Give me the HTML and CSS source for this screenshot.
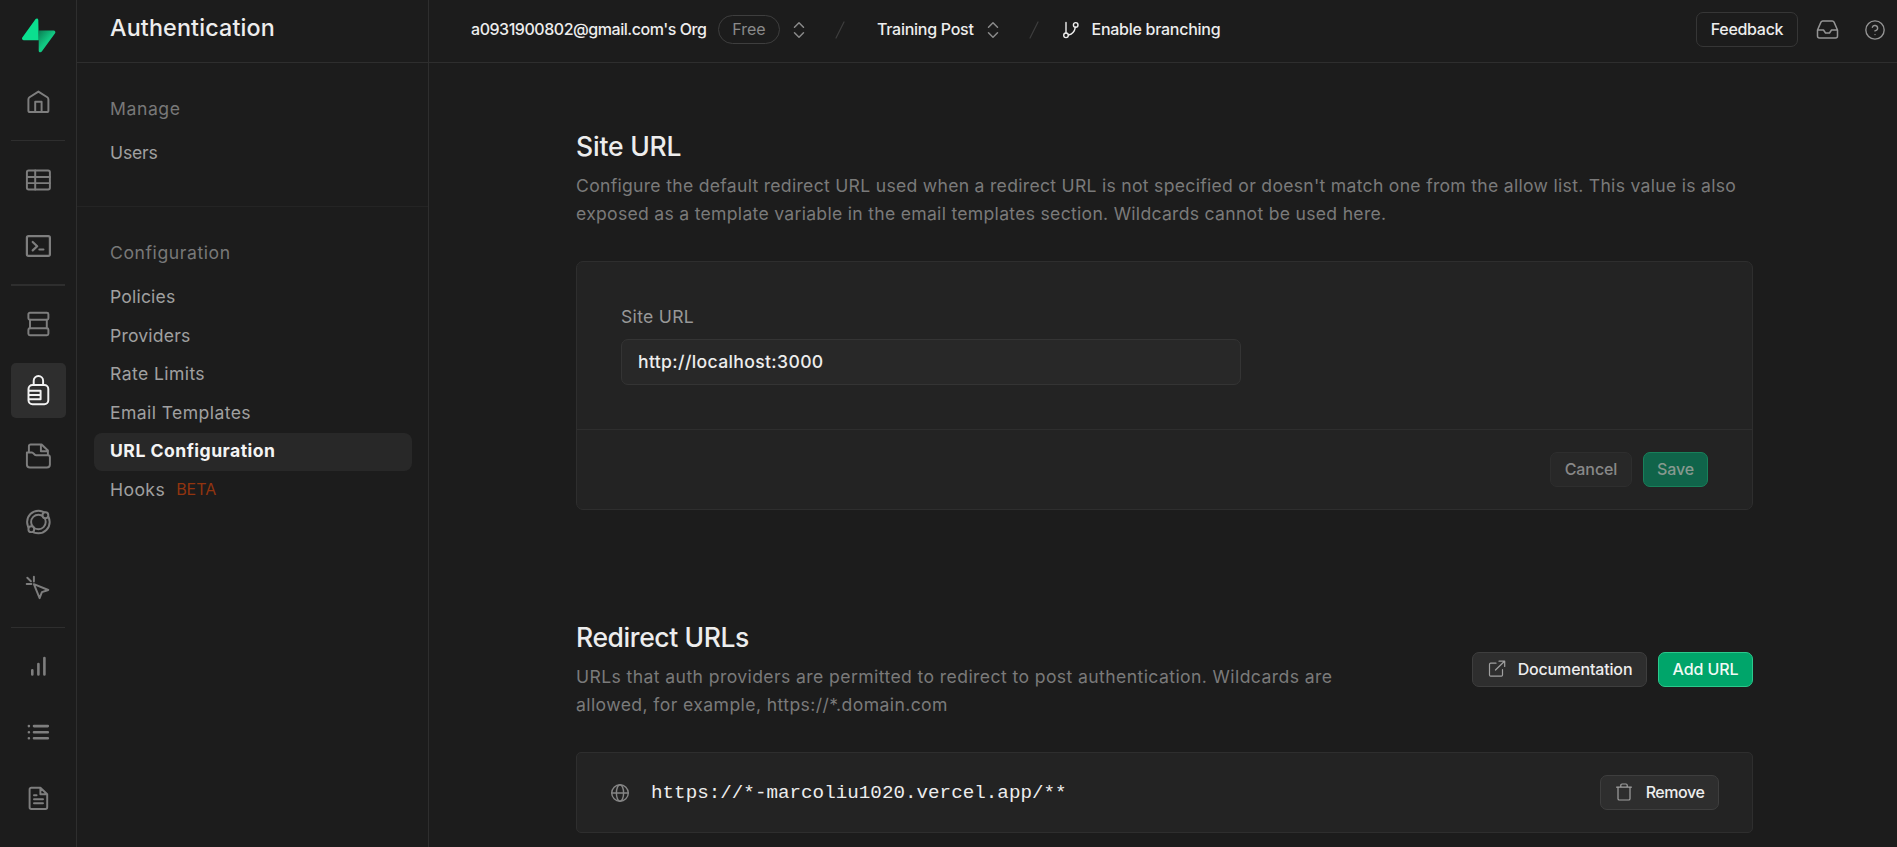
FILE: index.html
```html
<!DOCTYPE html>
<html lang="en">
<head>
<meta charset="utf-8">
<title>Authentication | URL Configuration</title>
<link rel="stylesheet" href="styles.css">
</head>
<body>
<div class="app">
  <nav class="rail">
    <a class="logo" href="#"><svg width="34" height="35" viewBox="0 0 34 35">
      <defs><linearGradient id="bolt" x1="17" y1="14" x2="26" y2="22" gradientUnits="userSpaceOnUse"><stop offset="0" stop-color="#0b8457"/><stop offset="1" stop-color="#12c983"/></linearGradient></defs>
      <path fill="url(#bolt)" d="M16.7 12.4H31.4a1.8 1.8 0 0 1 1.5 3L19.8 33.6c-1 1.3-3.1.7-3.1-.9z"/>
      <path fill="#0be08f" d="M16.7 22.3H2a1.8 1.8 0 0 1-1.5-3L13.6 1.100c1-1.300 2.700-.7 2.700.9z"/>
    </svg></a>
    <a class="item" href="#"><svg class="ico" viewBox="0 0 28 28"><path d="M14 3.600 5.100 9.300Q4 10.100 4 11.500V22.400A1.600 1.600 0 0 0 5.600 24H22.400A1.600 1.600 0 0 0 24 22.400V11.500Q24 10.100 22.900 9.300ZM10.800 24V13.700h6.400V24"/></svg></a>
    <hr class="rule-home">
    <a class="item" href="#"><svg class="ico" viewBox="0 0 28 28"><rect x="2.500" y="4.500" width="23" height="19" rx="1.800"/><path d="M10.800 4.500v19M2.500 10.900h23M2.500 17.100h23"/></svg></a>
    <a class="item" href="#"><svg class="ico thick" viewBox="0 0 28 28"><rect x="2.500" y="4.200" width="23" height="19.600" rx="1.600"/><path d="m8.300 10 4.500 4.200-4.500 4.200M15 17.500h4"/></svg></a>
    <hr class="rule-editor">
    <a class="item" href="#"><svg class="ico" viewBox="0 0 28 28"><rect x="4" y="2.700" width="20" height="7" rx="1.500"/><path d="M5.600 9.700v8.600M22.400 9.700v8.600"/><rect x="4" y="18.300" width="20" height="7" rx="1.500"/></svg></a>
    <a class="item active" href="#"><svg class="ico" viewBox="0 0 28 28"><rect x="4.100" y="9" width="19.800" height="19.200" rx="4"/><path d="M9.300 9V4.700a4.700 4.700 0 0 1 9.400 0V9M4.500 14.700H16.200V23.200H4.500M4.500 19H15.500"/></svg></a>
    <a class="item" href="#"><svg class="ico" viewBox="0 0 28 28"><path d="M4.500 10V4.200a1.700 1.700 0 0 1 1.700-1.700H17.200L23.500 8.500V13M16.500 2.800V9.200H23.300M2.500 10.400H7.600c1.600 0 1.900 2.800 4 2.800H23.500a2 2 0 0 1 2 2V22.500a3 3 0 0 1-3 3H5.500a3 3 0 0 1-3-3Z"/></svg></a>
    <a class="item" href="#"><svg class="ico" viewBox="0 0 28 28"><circle cx="14" cy="14" r="11.300"/><circle cx="14" cy="14" r="7.300"/><circle class="knock" cx="21" cy="7.200" r="2.900"/><circle class="knock" cx="6.900" cy="21.200" r="2.900"/></svg></a>
    <a class="item" href="#"><svg class="ico" viewBox="0 0 28 28"><path d="M2.300 10H7M9.500 2.800V7.500M2.900 3.800 6.500 7.300M9.500 10.200 23.900 16 17.500 18.200 15.200 24.200Z"/></svg></a>
    <hr>
    <a class="item" href="#"><svg class="ico heavy" viewBox="0 0 28 28"><path d="M7.900 18.300V22.500M14 12V22.500M20 6V22.500"/></svg></a>
    <a class="item" href="#"><svg class="ico heavy" viewBox="0 0 28 28"><path d="M9.600 8.100H23.400M9.600 14.200H23.400M9.600 20.300H23.400M4.500 8.100h.01M4.500 14.200h.01M4.500 20.300h.01"/></svg></a>
    <a class="item" href="#"><svg class="ico" viewBox="0 0 28 28"><path d="M16 3.800H6.900A1.700 1.700 0 0 0 5.200 5.500V23.300A1.700 1.700 0 0 0 6.900 25H21.100A1.700 1.700 0 0 0 22.800 23.300V10.300ZM16 4V10.200H22.600M9.600 11.300H12.200M9.600 15.200H18.600M9.600 19.200H18.600"/></svg></a>
  </nav>

  <aside class="panel">
    <h1 class="panel-title"><span>Authentication</span></h1>
    <section class="group">
      <h2>Manage</h2>
      <a class="link users" href="#">Users</a>
    </section>
    <section class="group">
      <h2>Configuration</h2>
      <a class="link short" href="#">Policies</a>
      <a class="link short" href="#">Providers</a>
      <a class="link" href="#">Rate Limits</a>
      <a class="link" href="#">Email Templates</a>
      <a class="link current" href="#">URL Configuration</a>
      <a class="link" href="#">Hooks<span class="beta">BETA</span></a>
    </section>
  </aside>

  <div class="content">
    <header class="topbar">
      <a class="crumb org" href="#">a0931900802@gmail.com's Org</a>
      <span class="plan"><span>Free</span></span>
      <svg class="updown first" viewBox="0 0 12 18"><path d="M1.500 6.300 6 1.800l4.500 4.500M1.500 11.700 6 16.200l4.500-4.500"/></svg>
      <svg class="slash" viewBox="0 0 10 18"><path d="M9 1 1 17"/></svg>
      <a class="crumb project" href="#">Training Post</a>
      <svg class="updown second" viewBox="0 0 12 18"><path d="M1.500 6.300 6 1.800l4.500 4.500M1.500 11.700 6 16.200l4.500-4.500"/></svg>
      <svg class="slash" viewBox="0 0 10 18"><path d="M9 1 1 17"/></svg>
      <svg class="branch" viewBox="0 0 18 18"><path d="M4 1.400V12M13.300 6.300Q12.300 12.500 6.500 14"/><circle cx="4" cy="14.300" r="2.300"/><circle cx="13.700" cy="3.900" r="2.300"/></svg>
      <a class="crumb enable" href="#">Enable branching</a>
      <div class="tools">
        <button class="btn outline feedback">Feedback</button>
        <svg class="inbox" viewBox="0 0 24 24"><path d="M22 12H16l-2 3H10L8 12H2M5.450 4.100 2 12v6a2 2 0 0 0 2 2H20a2 2 0 0 0 2-2V12L18.550 4.100A2 2 0 0 0 16.760 3H7.240A2 2 0 0 0 5.450 4.100Z"/></svg>
        <svg class="help" viewBox="0 0 24 24"><circle cx="12" cy="12" r="10"/><path d="M9.100 9a3 3 0 0 1 5.800 1c0 2-3 3-3 3M12 17h.01"/></svg>
      </div>
    </header>

    <main class="main">
      <section>
        <h2 class="title site">Site URL</h2>
        <p class="desc">Configure the default redirect URL used when a redirect URL is not specified or doesn't match one from the allow list. This value is also<br>exposed as a template variable in the email templates section. Wildcards cannot be used here.</p>
        <form class="card">
          <div class="card-body">
            <label for="site-url">Site URL</label>
            <input id="site-url" type="text" value="http://localhost:3000">
          </div>
          <div class="card-foot">
            <button class="btn neutral cancel" type="button">Cancel</button>
            <button class="btn primary save" type="button">Save</button>
          </div>
        </form>
      </section>

      <section class="redirects">
        <div class="head">
          <div>
            <h2 class="title">Redirect URLs</h2>
            <p class="desc wide">URLs that auth providers are permitted to redirect to post authentication. Wildcards are<br>allowed, for example, https://*.domain.com</p>
          </div>
          <div class="actions">
            <button class="btn neutral docs"><svg viewBox="0 0 18 18"><path d="M8 3.200H2.700A1.200 1.200 0 0 0 1.500 4.400V15A1.200 1.200 0 0 0 2.700 16.200H13.300A1.200 1.200 0 0 0 14.500 15V9.700M7.500 10 16.500 1.200M11 1.200h5.700V6.500"/></svg><span>Documentation</span></button>
            <button class="btn primary add">Add URL</button>
          </div>
        </div>
        <div class="url-row">
          <svg class="globe" viewBox="0 0 20 20"><circle cx="10" cy="10" r="8.300"/><ellipse cx="10" cy="10" rx="3.600" ry="8.300"/><path d="M1.700 10H18.300"/></svg>
          <span class="url">https://*-marcoliu1020.vercel.app/**</span>
          <button class="btn neutral remove"><svg viewBox="0 0 18 18"><path d="M1.600 4.200H16.400M3 4.200V15.700A1.300 1.300 0 0 0 4.300 17H13.700A1.300 1.300 0 0 0 15 15.700V4.200M5.800 4V2.200A1.200 1.200 0 0 1 7 1H11A1.200 1.200 0 0 1 12.200 2.200V4"/></svg><span>Remove</span></button>
        </div>
      </section>
    </main>
  </div>
</div>
</body>
</html>
```
FILE: styles.css
```css
* { box-sizing: border-box; }
body {
  margin: 0;
  background: #1c1c1c;
  color: #ededed;
  font-family: Inter, "Liberation Sans", sans-serif;
  font-size: 17.6px;
}
a { color: inherit; text-decoration: none; }
h1, h2, p { margin: 0; font-weight: 400; }
svg { display: block; flex: none; fill: none; stroke: currentColor; stroke-linecap: round; stroke-linejoin: round; }

.app { display: flex; height: 847px; overflow: hidden; }

/* Icon rail */
.rail {
  flex: none;
  width: 77px;
  padding: 18px 10px 0 11px;
  border-right: 1px solid #2e2e2e;
  display: flex;
  flex-direction: column;
  gap: 11px;
}
.rail hr { width: 54px; height: 1px; margin: 0; border: 0; background: #2e2e2e; flex: none; }
.rail .rule-home { margin: -0.6px 0 0.6px; }
.rail .rule-editor { height: 2px; margin: -0.5px 0; }
.logo { height: 45.5px; padding-left: 11px; flex: none; }
.logo svg { stroke: none; }
.item {
  flex: none;
  width: 55px;
  height: 55px;
  padding-right: 1px;
  display: grid;
  place-items: center;
  border-radius: 5px;
  color: #7e7e7e;
}
.item.active { background: #2e2e2e; color: #f2f2f2; }
.ico { width: 28px; height: 28px; stroke-width: 1.95; overflow: visible; }
.ico > * { transform: translateX(0.4px); }
.ico.thick { stroke-width: 2.2; }
.ico.heavy { stroke-width: 2.6; }
.knock { fill: #1c1c1c; }

/* Section menu */
.panel { flex: none; width: 352px; border-right: 1px solid #2e2e2e; }
.panel-title {
  height: 63px;
  padding: 0 0 8px 33px;
  border-bottom: 1px solid #2e2e2e;
  display: flex;
  align-items: center;
  font-size: 23.3px;
  font-weight: 500;
  letter-spacing: 0.15px;
}
.group { padding: 34px 16px 32px 17px; }
.group + .group { border-top: 1px solid #242424; }
.group h2 { margin: 0 0 14px 16px; font-size: 17.6px; line-height: 24px; letter-spacing: 0.57px; color: #787878; }
.link {
  display: flex;
  align-items: center;
  height: 38.5px;
  padding: 0 0 2px 16px;
  border-radius: 8px;
  color: #a0a0a0;
  letter-spacing: 0.4px;
}
.link.users { padding-bottom: 4px; letter-spacing: -0.2px; }
.link.short { letter-spacing: 0.17px; }
.link.current { background: #282828; color: #f4f4f4; font-weight: 700; letter-spacing: 0.48px; }
.beta { margin-left: 11px; font-size: 16px; letter-spacing: 0; color: #92340f; }

/* Top bar */
.content { flex: 1; min-width: 0; }
.topbar {
  height: 63px;
  padding: 0 11px 3px 42px;
  border-bottom: 1px solid #2e2e2e;
  display: flex;
  align-items: center;
}
.crumb { padding-bottom: 1px; font-size: 16px; font-weight: 500; letter-spacing: -0.27px; white-space: nowrap; }
.org { width: 247px; letter-spacing: -0.46px; }
.project { width: 110px; }
.plan {
  width: 62px;
  height: 29px;
  padding-bottom: 1px;
  border: 1px solid #3e3e3e;
  border-radius: 15px;
  display: grid;
  place-items: center;
  font-size: 16px;
  color: #8a8a8a;
}
.updown { width: 12px; height: 18px; color: #8a8a8a; stroke-width: 1.5; }
.updown.first { margin: 0 30px 0 13px; }
.updown.second { margin-right: 30px; }
.slash { width: 10px; height: 18px; color: #3e3e3e; stroke-width: 1.2; }
.updown.first + .slash { margin-right: 32px; }
.updown.second + .slash { margin-right: 22.5px; }
.branch { width: 18px; height: 18px; margin-right: 12px; stroke-width: 1.4; }
.tools { margin-left: auto; display: flex; align-items: center; }
.inbox { width: 27px; height: 24px; margin: 0 23px 0 16px; color: #949494; stroke-width: 1.5; }
.help { width: 22px; height: 22px; color: #949494; stroke-width: 1.5; }

/* Buttons */
.btn {
  flex: none;
  height: 35px;
  padding: 0 0 1px;
  border: 1px solid #3e3e3e;
  border-radius: 7px;
  background: #2e2e2e;
  color: #ededed;
  font: 500 16px Inter, "Liberation Sans", sans-serif;
  letter-spacing: -0.1px;
  display: flex;
  align-items: center;
  justify-content: center;
}
.btn svg { width: 18px; height: 18px; color: #a0a0a0; stroke-width: 1.2; }
.btn.outline { background: transparent; border-color: #363636; letter-spacing: -0.3px; }
.feedback { width: 102px; }
.cancel { width: 82px; background: #282828; border-color: #2e2e2e; color: #888; }
.primary { background: #00a56a; border-color: #2bc98c; color: #f0faf5; }
.save { width: 65px; background: #10644a; border-color: #18805a; color: #86998f; }
.btn.docs { width: 175px; gap: 12px; padding-left: 1px; letter-spacing: -0.15px; }
.add { width: 95px; }
.btn.remove { width: 119px; gap: 13px; margin-left: auto; letter-spacing: -0.45px; }

/* Page */
.main { width: 1324px; padding: 67px 0 0 147px; }
.title { font-size: 26.5px; line-height: 32px; font-weight: 500; letter-spacing: -0.4px; }
.title.site { letter-spacing: -0.2px; }
.desc { margin-top: 10px; line-height: 28px; letter-spacing: 0.285px; color: #7a7a7a; white-space: nowrap; }
.desc.wide { letter-spacing: 0.4px; }
.card {
  margin-top: 33px;
  background: #232323;
  border: 1px solid #2e2e2e;
  border-radius: 7px;
}
.card-body { padding: 43px 44px 44px; border-bottom: 1px solid #2e2e2e; }
.card label { display: block; line-height: 24px; margin-bottom: 10px; letter-spacing: 0.3px; color: #989898; }
.card input {
  display: block;
  width: 620px;
  height: 46px;
  padding: 0 16px 2px;
  border: 1px solid #343434;
  border-radius: 7px;
  background: #282828;
  color: #ededed;
  font: 500 17.6px Inter, "Liberation Sans", sans-serif;
  letter-spacing: 0.35px;
}
.card-foot { height: 79px; padding: 0 44px; display: flex; align-items: center; justify-content: flex-end; gap: 11px; }
.redirects { margin-top: 111px; }
.head { display: flex; align-items: center; justify-content: space-between; }
.actions { display: flex; gap: 11px; padding-bottom: 2px; }
.url-row {
  height: 81px;
  margin-top: 33px;
  padding: 0 33px;
  background: #232323;
  border: 1px solid #2e2e2e;
  border-radius: 5px;
  display: flex;
  align-items: center;
}
.globe { width: 20px; height: 20px; color: #858585; stroke-width: 1.4; }
.url { margin-left: 21px; padding-top: 1px; font: 19.2px "Liberation Mono", monospace; letter-spacing: 0.03px; }
```
